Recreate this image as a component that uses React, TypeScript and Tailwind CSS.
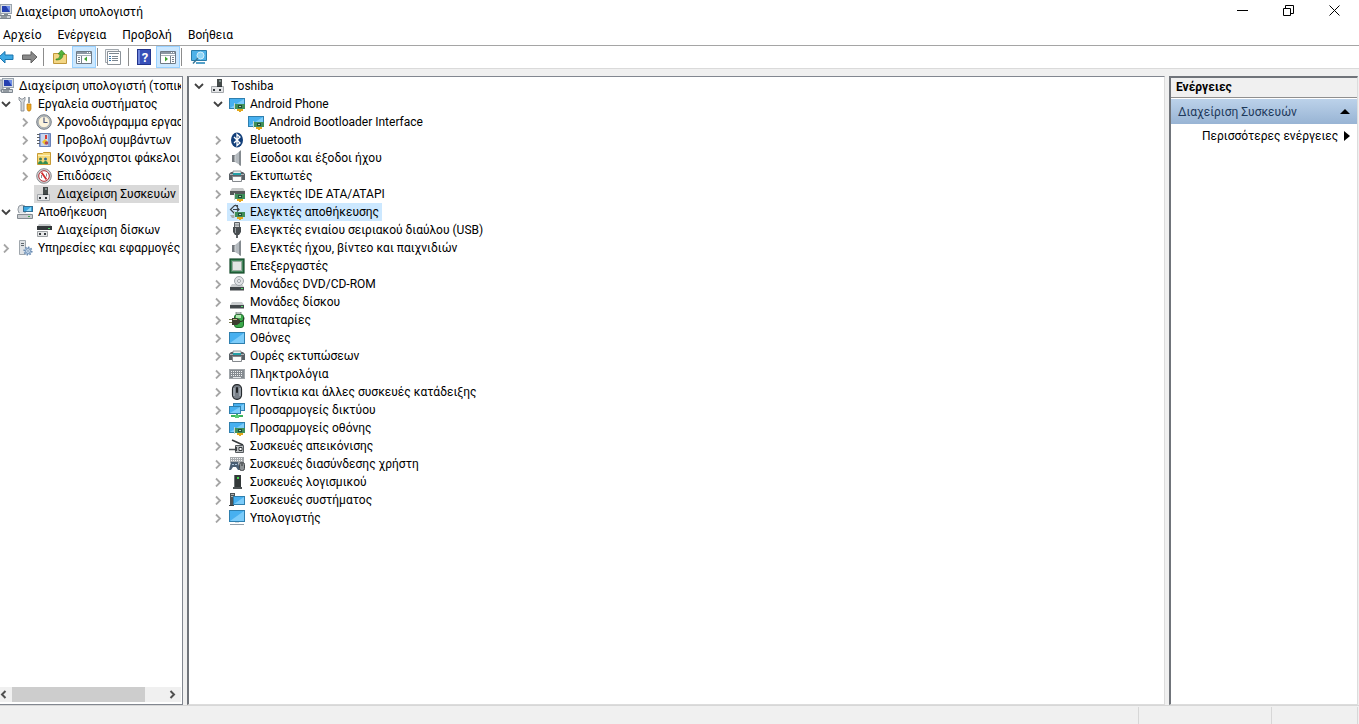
import React from "react";

interface TreeNode {
  label: string;
  icon: React.ReactNode;
  state?: "open" | "closed";
  selected?: "active" | "inactive";
  children?: TreeNode[];
}

const Icon = ({ children }: { children: React.ReactNode }) => (
  <svg viewBox="0 0 16 16" className="block size-4 shrink-0" aria-hidden="true">
    {children}
  </svg>
);

const Screen = ({ x = 0, y = 3, w = 15, h = 10 }: { x?: number; y?: number; w?: number; h?: number }) => (
  <>
    <rect x={x + 0.5} y={y + 0.5} width={w} height={h} fill="#47b0f0" stroke="#2f7fae" />
    <path d={`M${x + 1} ${y + h}L${x + w} ${y + 1}V${y + h}Z`} fill="#7cccfa" />
  </>
);

const Board = () => (
  <>
    <rect x="6" y="8" width="10" height="5" fill="#3f8f5a" />
    <rect x="5" y="7" width="1" height="7" fill="#c7d6cc" />
    <rect x="9" y="9" width="4" height="3" fill="#1f4f38" />
    <rect x="10" y="10" width="2" height="1" fill="#a9d8b8" />
    <path d="M8 13h6v2h-2v1h-2v-1H8z" fill="#e3a81c" />
  </>
);

const ComputerIcon = () => (
  <Icon>
    <rect x="1" y="2" width="4" height="11" fill="#b9bfc6" stroke="#8f979f" />
    <rect x="4.500" y=".5" width="11" height="9" fill="#d8dde3" stroke="#9aa4ae" />
    <rect x="6" y="2" width="8" height="6" fill="#2540b0" />
    <path d="M10 2h4v6z" fill="#6f8ee6" />
    <path d="M8 10h4v1H8z" fill="#7f8a94" />
    <path d="M3.500 11.500h11v3h-11z" fill="#ccd1d6" stroke="#7d868f" />
    <path d="M5 13h6" stroke="#5b646d" />
  </Icon>
);

const DeviceManagerIcon = () => (
  <Icon>
    <path d="M7 1h5v8H7z" fill="#454b4b" />
    <path d="M9 2h2v2H9z" fill="#7f8f8c" />
    <path d="M1.500 8.500h12v6h-12z" fill="#e4e5e7" stroke="#a4a8ac" />
    <path d="M3 11h2v2H3zM9 11h2v2H9zM7 8h5v1H7z" fill="#30363a" />
  </Icon>
);

const ToolsIcon = () => (
  <Icon>
    <path d="M2 1v3l2 2v9h3V6l1-2V1L6 3H4z" fill="#d4d8dc" stroke="#7c848b" strokeWidth=".8" />
    <path d="M11 1h2v6h-2z" fill="#9aa3ab" />
    <path d="M10 8h4v5l-1 2h-2l-1-2z" fill="#f0a81e" stroke="#b97a10" strokeWidth=".7" />
  </Icon>
);

const ClockIcon = () => (
  <Icon>
    <circle cx="8" cy="8" r="7.300" fill="#b9c0c6" stroke="#6b7278" strokeWidth=".9" />
    <circle cx="8" cy="8" r="5.700" fill="#fbf3dc" stroke="#8d949a" strokeWidth=".6" />
    <path d="M8 3.500V8.500H11.500" stroke="#4d5a80" strokeWidth="1.200" fill="none" />
  </Icon>
);

const EventIcon = () => (
  <Icon>
    <path d="M3.500 1.500h11v13h-11z" fill="#8ba6da" stroke="#6a82b8" />
    <path d="M5 2h7v12H5z" fill="#c9d6ee" />
    <path d="M1 2.500h3M1 5.500h3M1 8.500h3M1 11.500h3" stroke="#5c6166" />
    <path d="M9 3h2v4H9z" fill="#d43b34" />
    <path d="M6 10l3-3 3 3-3 3z" fill="#efc42a" />
    <circle cx="10.500" cy="11" r="1.800" fill="#b5475a" />
  </Icon>
);

const SharedFolderIcon = () => (
  <Icon>
    <path d="M1.500 14.500v-11h5l1-1h7v12z" fill="#f7d978" stroke="#c79b35" />
    <path d="M2 5.500h12" stroke="#fdf0b8" />
    <circle cx="4.500" cy="9" r="1.500" fill="#4d7f58" />
    <circle cx="9.500" cy="9" r="1.500" fill="#3a6f8f" />
    <path d="M2 14c0-4 5-4 5 0zM7 14c0-4 5-4 5 0z" fill="#2f8d52" />
  </Icon>
);

const PerformanceIcon = () => (
  <Icon>
    <circle cx="8" cy="8" r="7.300" fill="#d5d5d8" stroke="#7d7f83" strokeWidth=".9" />
    <circle cx="8" cy="8" r="5.300" fill="#fff" stroke="#b03036" strokeWidth="1" />
    <path d="M5.500 4.500l5 7" stroke="#d22c2c" strokeWidth="1.800" />
    <path d="M5.500 10V7M10.500 5.500v3" stroke="#8b8f94" />
  </Icon>
);

const StorageIcon = () => (
  <Icon>
    <rect x="1" y="1" width="8" height="9" rx="4" fill="#dde1e5" stroke="#7f878e" strokeWidth=".8" />
    <rect x="6.500" y="2.500" width="9" height="5" fill="#39a6e0" stroke="#326f94" />
    <path d="M9 7l5-4v4z" fill="#9adcf7" />
    <path d="M2 9h12l1 2H1z" fill="#eceef0" />
    <path d="M.5 10.500h15v4H.5z" fill="#c9cccf" stroke="#858c93" />
    <path d="M11 12.500h2" stroke="#3da552" />
  </Icon>
);

const DiskManagementIcon = () => (
  <Icon>
    <path d="M3 2h11l2 3H1z" fill="#c5c8ca" />
    <path d="M1 4h15v4H1z" fill="#33383a" />
    <path d="M12 6h2v1h-2z" fill="#54d46b" />
    <path d="M1.500 9.500h10v5h-10z" fill="#e6e7e8" stroke="#9da1a4" />
    <path d="M3 11h2v2H3zM8 11h2v2H8z" fill="#343a3e" />
  </Icon>
);

const ServicesIcon = () => (
  <Icon>
    <path d="M2.500.5h6v14h-6z" fill="#dfe2e5" stroke="#a0a7ad" />
    <path d="M4 3.500h3M4 5.500h3" stroke="#5f676d" />
    <circle cx="11" cy="11" r="3.800" fill="#bcd3ec" stroke="#6c8cb1" strokeWidth="1.600" strokeDasharray="1.500 1.400" />
    <circle cx="11" cy="11" r="2.400" fill="#d9e8f7" stroke="#6c8cb1" />
    <circle cx="11" cy="11" r=".8" fill="#5c7da3" />
  </Icon>
);

const AdapterIcon = () => (
  <Icon>
    <Screen y={2} w={15} h={10} />
    <Board />
  </Icon>
);

const BluetoothIcon = () => (
  <Icon>
    <ellipse cx="8" cy="8" rx="6" ry="7.600" fill="#123f7a" />
    <path d="M5 5l6 6-3 2.500v-11L11 5l-6 6" fill="none" stroke="#fff" strokeWidth="1.300" />
  </Icon>
);

const SpeakerIcon = () => (
  <Icon>
    <path d="M3 5h3v7H3z" fill="#73787d" />
    <path d="M6 5l5-4v14l-5-3z" fill="#b4babf" />
    <path d="M10 2l2-2v16l-2-1z" fill="#858b90" />
    <path d="M6 5.500v6" stroke="#d9dcde" />
  </Icon>
);

const PrinterIcon = () => (
  <Icon>
    <path d="M4 3h8v3H4z" fill="#e9ebec" stroke="#7a8084" strokeWidth=".8" />
    <path d="M2 4h2v2h8V4h2l2 2v6h-3V9H3v3H0V6z" fill="#5a6166" />
    <path d="M1 6.500h14" stroke="#aeb4b8" />
    <path d="M4 5h8v2H4z" fill="#23a0a8" />
    <path d="M3.500 8.500h9v5h-9z" fill="#f9fafa" stroke="#85898d" />
  </Icon>
);

const IdeIcon = () => (
  <Icon>
    <path d="M3 2h11l2 3H1z" fill="#c8caca" />
    <path d="M1 5h15v4H1z" fill="#565b5b" />
    <Board />
  </Icon>
);

const StorageControllerIcon = () => (
  <Icon>
    <path d="M9 1.500L5.500 1.500 1.500 5.500l4 4M4 5.500h6M8 3.500l2 2-2 2M6 1l3 2" fill="none" stroke="#3d4347" strokeWidth="1.200" />
    <path d="M1 11h5v3H3z" fill="#a8adb0" />
    <Board />
  </Icon>
);

const UsbIcon = () => (
  <Icon>
    <path d="M5.500.5h5v5h-5z" fill="#c7cacc" stroke="#5a5f63" />
    <path d="M6.500 2.500h1v1h-1zM8.500 2.500h1v1h-1z" fill="#3b4043" />
    <path d="M4 5h8v5l-2 3H6l-2-3z" fill="#484d50" />
    <path d="M6 6h1v5H6z" fill="#969b9f" />
    <path d="M7 13h2v3H7z" fill="#5d6265" />
  </Icon>
);

const CpuIcon = () => (
  <Icon>
    <rect x="1" y="1" width="14" height="14" fill="#2d7449" stroke="#164b2b" strokeWidth="1.200" />
    <rect x="2.500" y="2.500" width="11" height="11" fill="none" stroke="#5f9c74" strokeDasharray="1 1" />
    <rect x="3.500" y="3.500" width="9" height="9" fill="#e3e5e4" stroke="#9aaba0" />
  </Icon>
);

const Drive = () => (
  <>
    <path d="M3 8h10l2 3H1z" fill="#c9ccce" />
    <path d="M1 11h14v3.500H1z" fill="#42474a" />
    <path d="M12 12h2v1h-2z" fill="#55dc6d" />
  </>
);

const DvdIcon = () => (
  <Icon>
    <Drive />
    <circle cx="10" cy="5" r="4.500" fill="#e1e3e6" stroke="#8d9398" strokeWidth=".8" />
    <circle cx="10" cy="5" r="1.500" fill="#fff" stroke="#8d9398" strokeWidth=".8" />
  </Icon>
);

const DiskIcon = () => (
  <Icon>
    <Drive />
  </Icon>
);

const BatteryIcon = () => (
  <Icon>
    <rect x="5.500" y="2.500" width="9" height="13" rx="2.500" fill="#3ba94b" stroke="#1e6d2a" />
    <path d="M7 0h5v2H7z" fill="#dfe3df" stroke="#60706a" strokeWidth=".7" />
    <path d="M7 3h5v3H7z" fill="#b4e8b2" />
    <path d="M0 7h4v1H0zM0 10h4v1H0z" fill="#777a4e" />
    <path d="M3 6h5l3 2v3l-3 2H3z" fill="#3c3d30" />
    <path d="M4 7h4v1H4z" fill="#b7b47d" />
    <path d="M11 9.500c3 0 4-1 4-4" stroke="#292b25" fill="none" />
  </Icon>
);

const MonitorIcon = () => (
  <Icon>
    <Screen y={2} h={11} />
  </Icon>
);

const KeyboardIcon = () => (
  <Icon>
    <rect x=".5" y="3.500" width="15" height="9" fill="#858b90" stroke="#a0a5a9" />
    <path d="M2 5.500h12M2 7.500h12M2 9.500h12" stroke="#eef0f1" strokeDasharray="1 1" />
    <path d="M4 11.500h8" stroke="#e3e6e8" />
  </Icon>
);

const MouseIcon = () => (
  <Icon>
    <rect x="3.500" y=".7" width="9" height="14.600" rx="4.200" fill="#7a8189" stroke="#25292d" strokeWidth="1.200" />
    <path d="M5 4v8M11 4v8" stroke="#bcc4cc" />
    <rect x="7" y="3" width="2" height="6" rx="1" fill="#202326" />
  </Icon>
);

const NetworkIcon = () => (
  <Icon>
    <Screen x={4} y={1} w={11} h={7} />
    <Screen x={0} y={4} w={11} h={7} />
    <path d="M7 12h2v1h5v2H2v-2h5z" fill="#3bb45a" />
    <path d="M6 13h4v3H6z" fill="#59cc73" />
  </Icon>
);

const ImagingIcon = () => (
  <Icon>
    <path d="M3 2l11 5" stroke="#34383b" strokeWidth="1.500" />
    <path d="M0 11.500h6" stroke="#4b5053" strokeWidth="1.500" />
    <path d="M6.500 7.500h8v7h-8z" fill="#b9bdbf" stroke="#565b5f" />
    <path d="M10 9.500h3v3h-3z" fill="#fff" stroke="#34393c" />
    <path d="M6 9h2v4H6z" fill="#3c4144" />
  </Icon>
);

const HidIcon = () => (
  <Icon>
    <path d="M1 1h14v6H1z" fill="#a5a9ac" />
    <path d="M2 2.500h12M2 4.500h12" stroke="#f2f3f4" strokeDasharray="1 1" />
    <path d="M2 6h7l2 8H9l-2-3H4l-2 3H0z" fill="#4a5e73" />
    <path d="M3 8h2v1H3zM6 8h2v1H6z" fill="#a8c1d8" />
    <rect x="10.500" y="6.500" width="5" height="8" rx="2" fill="#8f9497" stroke="#45494c" />
    <path d="M13 7v3" stroke="#303436" />
  </Icon>
);

const SoftwareIcon = () => (
  <Icon>
    <path d="M5 1h7v12H5z" fill="#333839" />
    <path d="M5 1h1v12H5z" fill="#6c7274" />
    <path d="M8 3h2v2H8z" fill="#45dc50" />
    <path d="M4 13h9v2H4z" fill="#4b5052" />
  </Icon>
);

const SystemIcon = () => (
  <Icon>
    <path d="M1 1h5v12H1z" fill="#4d5355" />
    <path d="M2 2h3v1H2zM2 4h3v1H2z" fill="#aab0b2" />
    <Screen x={4} y={4} w={11} h={8} />
    <path d="M0 13h5v1H0z" fill="#383d3f" />
  </Icon>
);

const DesktopIcon = () => (
  <Icon>
    <Screen y={0} h={11} />
    <path d="M1 14h14v1H1z" fill="#8f9da9" />
    <path d="M6 12h4v1H6z" fill="#d0dbe3" />
  </Icon>
);

const consoleTree: TreeNode = {
  label: "Διαχείριση υπολογιστή (τοπικός)",
  icon: <ComputerIcon />,
  children: [
    {
      label: "Εργαλεία συστήματος",
      icon: <ToolsIcon />,
      state: "open",
      children: [
        { label: "Χρονοδιάγραμμα εργασιών", icon: <ClockIcon />, state: "closed" },
        { label: "Προβολή συμβάντων", icon: <EventIcon />, state: "closed" },
        { label: "Κοινόχρηστοι φάκελοι", icon: <SharedFolderIcon />, state: "closed" },
        { label: "Επιδόσεις", icon: <PerformanceIcon />, state: "closed" },
        { label: "Διαχείριση Συσκευών", icon: <DeviceManagerIcon />, selected: "inactive" },
      ],
    },
    {
      label: "Αποθήκευση",
      icon: <StorageIcon />,
      state: "open",
      children: [{ label: "Διαχείριση δίσκων", icon: <DiskManagementIcon /> }],
    },
    { label: "Υπηρεσίες και εφαρμογές", icon: <ServicesIcon />, state: "closed" },
  ],
};

const deviceTree: TreeNode = {
  label: "Toshiba",
  icon: <DeviceManagerIcon />,
  state: "open",
  children: [
    {
      label: "Android Phone",
      icon: <AdapterIcon />,
      state: "open",
      children: [{ label: "Android Bootloader Interface", icon: <AdapterIcon /> }],
    },
    { label: "Bluetooth", icon: <BluetoothIcon />, state: "closed" },
    { label: "Είσοδοι και έξοδοι ήχου", icon: <SpeakerIcon />, state: "closed" },
    { label: "Εκτυπωτές", icon: <PrinterIcon />, state: "closed" },
    { label: "Ελεγκτές IDE ATA/ATAPI", icon: <IdeIcon />, state: "closed" },
    { label: "Ελεγκτές αποθήκευσης", icon: <StorageControllerIcon />, state: "closed", selected: "active" },
    { label: "Ελεγκτές ενιαίου σειριακού διαύλου (USB)", icon: <UsbIcon />, state: "closed" },
    { label: "Ελεγκτές ήχου, βίντεο και παιχνιδιών", icon: <SpeakerIcon />, state: "closed" },
    { label: "Επεξεργαστές", icon: <CpuIcon />, state: "closed" },
    { label: "Μονάδες DVD/CD-ROM", icon: <DvdIcon />, state: "closed" },
    { label: "Μονάδες δίσκου", icon: <DiskIcon />, state: "closed" },
    { label: "Μπαταρίες", icon: <BatteryIcon />, state: "closed" },
    { label: "Οθόνες", icon: <MonitorIcon />, state: "closed" },
    { label: "Ουρές εκτυπώσεων", icon: <PrinterIcon />, state: "closed" },
    { label: "Πληκτρολόγια", icon: <KeyboardIcon />, state: "closed" },
    { label: "Ποντίκια και άλλες συσκευές κατάδειξης", icon: <MouseIcon />, state: "closed" },
    { label: "Προσαρμογείς δικτύου", icon: <NetworkIcon />, state: "closed" },
    { label: "Προσαρμογείς οθόνης", icon: <AdapterIcon />, state: "closed" },
    { label: "Συσκευές απεικόνισης", icon: <ImagingIcon />, state: "closed" },
    { label: "Συσκευές διασύνδεσης χρήστη", icon: <HidIcon />, state: "closed" },
    { label: "Συσκευές λογισμικού", icon: <SoftwareIcon />, state: "closed" },
    { label: "Συσκευές συστήματος", icon: <SystemIcon />, state: "closed" },
    { label: "Υπολογιστής", icon: <DesktopIcon />, state: "closed" },
  ],
};

const selectedStyles = {
  active: "bg-[#cce8ff]",
  inactive: "bg-[#d9d9d9]",
};

const TreeItem = ({ node }: { node: TreeNode }) => (
  <li>
    <div className="flex h-[18px] items-center whitespace-nowrap">
      {node.state ? (
        <button className="flex h-full w-[17px] shrink-0 items-center justify-center pr-px" aria-label={node.label}>
          <svg viewBox="0 0 10 10" className="size-2.5" fill="none" strokeWidth="1.800">
            {node.state === "open" ? (
              <path d="M1 3l4 4 4-4" stroke="#404040" />
            ) : (
              <path d="M3 1.500l4 4-4 4" stroke="#a6a6a6" />
            )}
          </svg>
        </button>
      ) : (
        <span className="w-[17px] shrink-0" />
      )}
      <span
        className={`flex h-full items-center gap-[5px] pl-0.5 pr-[3px] ${node.selected ? selectedStyles[node.selected] : ""}`}
      >
        {node.icon}
        {node.label}
      </span>
    </div>
    {node.children && (
      <ul className="pl-[19px]">
        {node.children.map((child) => (
          <TreeItem key={child.label} node={child} />
        ))}
      </ul>
    )}
  </li>
);

const ToolButton = ({
  label,
  active,
  children,
}: {
  label: string;
  active?: boolean;
  children: React.ReactNode;
}) => (
  <button
    aria-label={label}
    className={`flex h-[22px] w-6 shrink-0 items-center justify-center ${active ? "border border-[#99d1ff] bg-[#cce8ff]" : ""}`}
  >
    <Icon>{children}</Icon>
  </button>
);

const Separator = () => <span className="mx-px h-[18px] w-px shrink-0 bg-[#8c8c8c]" />;

const WindowGlyph = () => (
  <>
    <path d="M.5 2.500h15v12H.5z" fill="#fff" stroke="#6e7a85" />
    <path d="M1 3h14v2H1z" fill="#8c98a4" />
    <path d="M11 3.500h1M13 3.500h1" stroke="#fff" />
    <path d="M1 6.500h14" stroke="#aab3bb" />
  </>
);

const ToolBar = () => (
  <div className="flex h-[23px] items-center border-b border-[#dadada]">
    <div className="-ml-1.5 flex items-center">
      <ToolButton label="Πίσω">
        <path d="M1 8l6-5.500V6h8v4.500H7V14z" fill="#3fa9e4" stroke="#1b74ad" />
      </ToolButton>
      <ToolButton label="Εμπρός">
        <path d="M15 8L9 2.500V6H.5v4.500H9V14z" fill="#8a8a8a" stroke="#606060" />
      </ToolButton>
      <Separator />
    </div>
    <div className="flex items-center pl-[3px]">
      <ToolButton label="Επάνω ένα επίπεδο">
        <path d="M1.500 14.500v-10h5l1 1h7v9z" fill="#f3d684" stroke="#c0983c" />
        <path d="M4 10c3 0 4-2 4-5H6l3.500-4L13 5h-2c0 4-2 6-7 6z" fill="#55b43b" stroke="#2f7f20" strokeWidth=".6" />
      </ToolButton>
      <ToolButton label="Εμφάνιση δέντρου κονσόλας" active>
        <WindowGlyph />
        <path d="M5.500 7v7M2 8.500h2M2 10.500h2M2 12.500h2" stroke="#78838d" />
        <path d="M11 7.500v5L8 10z" fill="#3fa532" />
      </ToolButton>
      <Separator />
    </div>
    <div className="flex items-center pl-0.5">
      <ToolButton label="Ιδιότητες">
        <path d="M.5.5h13v13H.5z" fill="#f4f5f6" stroke="#a3a9af" />
        <path d="M2.500 2.500h13v13h-13z" fill="#fff" stroke="#8b9299" />
        <path d="M4 4.500h10M7 7.500h6M7 9.500h6M7 11.500h6" stroke="#7d8790" />
        <path d="M4 7.500h2M4 9.500h2M4 11.500h2" stroke="#3c78ac" />
      </ToolButton>
    </div>
    <div className="flex items-center pl-0.5">
      <Separator />
      <div className="flex items-center pl-0.5">
        <ToolButton label="Βοήθεια">
          <rect x="1.500" y=".5" width="13" height="15" fill="#3850b8" stroke="#22348c" />
          <path d="M2 1h2v14H2z" fill="#6f86dc" />
          <text x="9" y="13" textAnchor="middle" fontSize="13" fontWeight="700" fill="#fff">
            ?
          </text>
        </ToolButton>
        <ToolButton label="Εμφάνιση παραθύρου ενεργειών" active>
          <WindowGlyph />
          <path d="M10.500 7v7M12 8.500h2M12 10.500h2M12 12.500h2" stroke="#78838d" />
          <path d="M5 7.500v5L8 10z" fill="#3fa532" />
        </ToolButton>
        <Separator />
      </div>
    </div>
    <div className="flex items-center pl-1">
      <ToolButton label="Σάρωση για αλλαγές υλικού">
        <path d="M.5 1.500h15v10H.5z" fill="#4fb2e8" stroke="#2b7ca9" />
        <path d="M5 14h9" stroke="#55a1c9" strokeWidth="2" />
        <circle cx="9.500" cy="6.500" r="3.500" fill="#8fd4f5" stroke="#d6effb" />
        <path d="M7 9l-5 5.500" stroke="#367596" strokeWidth="1.500" />
      </ToolButton>
    </div>
  </div>
);

const ScrollBar = () => (
  <div className="mb-0.5 mr-px flex h-[15px] items-center bg-[#f0f0f0]">
    <button aria-label="Κύλιση αριστερά" className="flex w-3 justify-start">
      <svg viewBox="0 0 7 9" className="h-[9px] w-[7px]" fill="none" stroke="#505050" strokeWidth="2">
        <path d="M5.500 1L2 4.500 5.500 8" />
      </svg>
    </button>
    <div className="flex h-full flex-1">
      <span className="h-full w-[85%] bg-[#cdcdcd]" />
    </div>
    <button aria-label="Κύλιση δεξιά" className="flex w-3 justify-start">
      <svg viewBox="0 0 7 9" className="h-[9px] w-[7px]" fill="none" stroke="#505050" strokeWidth="2">
        <path d="M1.500 1L5 4.500 1.500 8" />
      </svg>
    </button>
  </div>
);

const TitleBar = () => (
  <header className="flex h-6 items-center">
    <div className="-ml-1 flex flex-1 items-center gap-1">
      <ComputerIcon />
      <h1>Διαχείριση υπολογιστή</h1>
    </div>
    <div className="flex h-5 self-start pr-0.5">
      <button aria-label="Ελαχιστοποίηση" className="flex w-[46px] items-center justify-center">
        <svg viewBox="0 0 11 11" className="size-[11px]" fill="none" stroke="#000">
          <path d="M0 5.500h11" />
        </svg>
      </button>
      <button aria-label="Επαναφορά" className="flex w-[46px] items-center justify-center">
        <svg viewBox="0 0 11 11" className="size-[11px]" fill="none" stroke="#000">
          <path d="M.5 3.500h7v7h-7zM2.500 3V.5h8v8H8" />
        </svg>
      </button>
      <button aria-label="Κλείσιμο" className="flex w-[46px] items-center justify-center">
        <svg viewBox="0 0 11 11" className="size-[11px]" fill="none" stroke="#000">
          <path d="M.5.5l10 10M10.500.5l-10 10" />
        </svg>
      </button>
    </div>
  </header>
);

const App: React.FC = () => {
  return (
    <div className="flex h-screen flex-col overflow-hidden bg-white font-['Roboto','Noto_Sans',sans-serif] text-[12px] leading-[18px] text-black">
      <TitleBar />
      <nav className="flex h-[22px] items-center gap-4 border-b border-[#a5a5a5] pl-[3px]">
        <button>Αρχείο</button>
        <button>Ενέργεια</button>
        <button>Προβολή</button>
        <button>Βοήθεια</button>
      </nav>
      <ToolBar />

      <main className="flex min-h-0 flex-1 gap-1 bg-[#f0f0f0] pt-[7px]">
        <section className="flex w-[183px] shrink-0 flex-col overflow-hidden border-b border-r border-t border-[#828790] bg-white">
          <ul className="-ml-[21px] mr-px flex-1 overflow-hidden">
            <TreeItem node={consoleTree} />
          </ul>
          <ScrollBar />
        </section>

        <section className="min-w-0 flex-1 overflow-hidden border-b border-l-2 border-r border-t border-b-[#dcdcdc] border-l-[#70747a] border-r-[#dcdcdc] border-t-[#828790] bg-white">
          <ul className="pl-0.5">
            <TreeItem node={deviceTree} />
          </ul>
        </section>

        <aside className="mr-px w-[189px] shrink-0 border-b border-l-2 border-r border-t-2 border-b-[#dcdcdc] border-l-[#70747a] border-r-[#dcdcdc] border-t-[#70747a] bg-white">
          <h2 className="h-5 border-b border-[#8f8f8f] bg-[#f0f0f0] pl-[5px] font-bold">Ενέργειες</h2>
          <button className="mt-px flex h-[25px] w-full items-center justify-between bg-linear-to-b from-[#bcd2ea] to-[#98b4d4] pl-[7px] pr-[7px] text-[#1e395b]">
            Διαχείριση Συσκευών
            <svg viewBox="0 0 10 5" className="h-[5px] w-2.5">
              <path d="M5 0l5 5H0z" fill="#000" />
            </svg>
          </button>
          <button className="flex h-6 w-full items-center justify-between pl-[31px] pr-[7px]">
            Περισσότερες ενέργειες
            <svg viewBox="0 0 6 10" className="h-2.5 w-1.5">
              <path d="M0 0l6 5-6 5z" fill="#000" />
            </svg>
          </button>
        </aside>
      </main>

      <footer className="flex h-[19px] shrink-0 justify-end border-t border-[#d7d7d7] bg-[#f0f0f0] pr-px pt-px">
        <span className="w-[133px] border-l border-[#d7d7d7]" />
        <span className="w-[87px] border-l border-r border-[#d7d7d7]" />
      </footer>
    </div>
  );
};

export default App;
